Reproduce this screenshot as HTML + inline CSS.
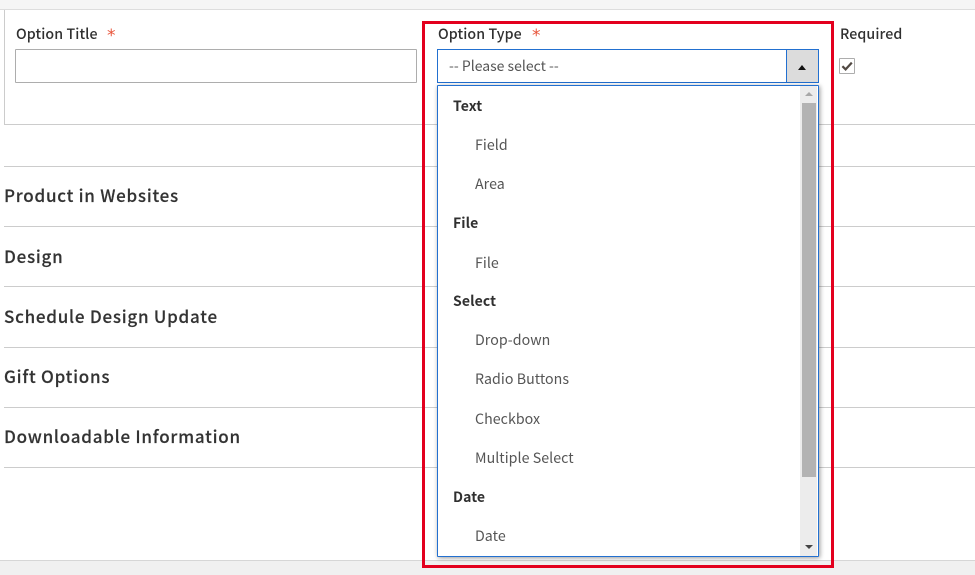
<!DOCTYPE html>
<html><head><meta charset="utf-8">
<style>
html,body{margin:0;padding:0;width:975px;height:575px;overflow:hidden;background:#fff}
body{position:relative;font-family:"Noto Sans CJK SC","Liberation Sans",sans-serif;color:#303030}
.b{position:absolute}
.t{position:absolute;white-space:nowrap;line-height:20px;height:20px}
.h{left:4px;font-size:17px;letter-spacing:.75px;color:#333;font-weight:500;-webkit-text-stroke:.15px #333}
.l{font-size:14.2px;letter-spacing:.1px;color:#303030;font-weight:500}
.g{left:453px;font-size:14px;letter-spacing:.1px;font-weight:700;color:#303030}
.o{left:475px;font-size:14.2px;letter-spacing:.05px;color:#555}
.s{color:#e8543a;font-size:17px;font-family:"DejaVu Sans",sans-serif}
.hr{position:absolute;left:4px;right:0;height:1px;background:#ccc}
</style></head><body>
<div class="b" style="left:0;top:0;width:975px;height:9px;background:#f5f5f5"></div>
<div class="b" style="left:0;top:9px;width:975px;height:1px;background:#ddd"></div>
<div class="b" style="left:4px;top:10px;width:1px;height:114px;background:#ccc"></div>
<div class="hr" style="top:124px"></div>
<div class="hr" style="top:166px"></div>
<div class="hr" style="top:226px"></div>
<div class="hr" style="top:286px"></div>
<div class="hr" style="top:347px"></div>
<div class="hr" style="top:407px"></div>
<div class="hr" style="top:467px"></div>
<div class="b" style="left:0;top:560px;width:975px;height:1px;background:#d6d6d6"></div>
<div class="b" style="left:0;top:561px;width:975px;height:14px;background:#f0f0f0"></div>

<div class="t l" style="left:16px;top:24px">Option Title</div>
<div class="t s" style="left:107px;top:26px">*</div>
<div class="b" style="left:15px;top:49px;width:400px;height:32px;border:1px solid #adadad;border-radius:1px;background:#fff"></div>

<div class="t l" style="left:438px;top:24px">Option Type</div>
<div class="t s" style="left:532px;top:26px">*</div>
<div class="t l" style="left:840px;top:24px">Required</div>

<div class="b" style="left:437px;top:49px;width:380px;height:32px;border:1px solid #2270d0;background:#fff"></div>
<div class="t" style="left:449px;top:56px;font-size:14px;color:#555">-- Please select --</div>
<div class="b" style="left:786px;top:50px;width:1px;height:32px;background:#2270d0"></div>
<div class="b" style="left:787px;top:50px;width:31px;height:32px;background:#dcdcdc"></div>
<div class="b" style="left:798px;top:65px;width:0;height:0;border-left:4px solid transparent;border-right:4px solid transparent;border-bottom:5px solid #111"></div>

<div class="b" style="left:839px;top:58px;width:14px;height:14px;border:1px solid #adadad;border-radius:1px;background:#fff"></div>
<svg class="b" style="left:839px;top:58px" width="16" height="16" viewBox="0 0 16 16"><path d="M3.4 8.2L6.6 11.4L12.8 4.6" fill="none" stroke="#514943" stroke-width="2.2"/></svg>

<div class="b" style="left:437px;top:85px;width:380px;height:470px;border:1px solid #2270d0;border-radius:1px;background:#fff;box-shadow:1px 1px 5px rgba(0,0,0,.4)"></div>
<div class="b" style="left:800px;top:86px;width:17px;height:470px;background:#ececec"></div>
<div class="b" style="left:802px;top:103px;width:14px;height:374px;background:#b3b3b3"></div>
<div class="b" style="left:805px;top:92px;width:0;height:0;border-left:4px solid transparent;border-right:4px solid transparent;border-bottom:4px solid #a8a8a8"></div>
<div class="b" style="left:805px;top:545px;width:0;height:0;border-left:4px solid transparent;border-right:4px solid transparent;border-top:4px solid #444"></div>

<div class="t g" style="top:96px">Text</div>
<div class="t o" style="top:135px">Field</div>
<div class="t o" style="top:174px">Area</div>
<div class="t g" style="top:213px">File</div>
<div class="t o" style="top:253px">File</div>
<div class="t g" style="top:291px">Select</div>
<div class="t o" style="top:330px">Drop-down</div>
<div class="t o" style="top:369px">Radio Buttons</div>
<div class="t o" style="top:409px">Checkbox</div>
<div class="t o" style="top:448px">Multiple Select</div>
<div class="t g" style="top:487px">Date</div>
<div class="t o" style="top:526px">Date</div>

<div class="t h" style="top:185px">Product in Websites</div>
<div class="t h" style="top:246px">Design</div>
<div class="t h" style="top:306px">Schedule Design Update</div>
<div class="t h" style="top:366px">Gift Options</div>
<div class="t h" style="top:426px">Downloadable Information</div>

<div class="b" style="left:422px;top:21px;width:406px;height:541px;border:3px solid #e3001e"></div>
</body></html>
